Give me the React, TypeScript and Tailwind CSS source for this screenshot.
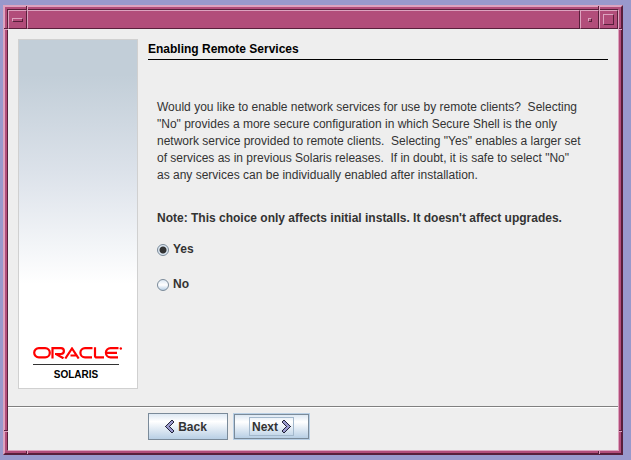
import React, { useState } from 'react';

const CHOICES = [
  { id: 'yes', label: 'Yes' },
  { id: 'no', label: 'No' },
];

const MESSAGE = [
  'Would you like to enable network services for use by remote clients?  Selecting',
  '"No" provides a more secure configuration in which Secure Shell is the only',
  'network service provided to remote clients.  Selecting "Yes" enables a larger set',
  'of services as in previous Solaris releases.  If in doubt, it is safe to select "No"',
  'as any services can be individually enabled after installation.',
].join('\n');

// Raised edge: light on top and left, dark on the right and bottom
const raised = 'border border-[#dca3bf] border-r-[#591f3b] border-b-[#591f3b]';

// Short notches that mark the resize corners on the frame
const FrameNotches: React.FC = () => (
  <div aria-hidden="true">
    <div className="absolute -top-px left-[21px] h-1 w-[2px] border-l border-l-[#591f3b] bg-[#dca3bf]" />
    <div className="absolute -top-px right-[21px] h-1 w-[2px] border-l border-l-[#591f3b] bg-[#dca3bf]" />
    <div className="absolute -bottom-px left-[21px] h-[3px] w-[2px] border-l border-l-[#591f3b] bg-[#dca3bf]" />
    <div className="absolute right-[21px] -bottom-px h-[3px] w-[2px] border-l border-l-[#591f3b] bg-[#dca3bf]" />
    <div className="absolute top-[21px] -left-px h-[2px] w-1 border-t border-t-[#591f3b] bg-[#dca3bf]" />
    <div className="absolute top-[21px] -right-px h-[2px] w-[3px] border-t border-t-[#591f3b] bg-[#dca3bf]" />
    <div className="absolute bottom-[21px] -left-px h-[2px] w-1 border-t border-t-[#591f3b] bg-[#dca3bf]" />
    <div className="absolute -right-px bottom-[21px] h-[2px] w-[3px] border-t border-t-[#591f3b] bg-[#dca3bf]" />
  </div>
);

const TitleBar: React.FC = () => (
  <div className="flex h-[19px] bg-[#b24d7a]">
    <button type="button" aria-label="Window menu" className={`${raised} flex w-[19px] items-center justify-center`}>
      <span className={`${raised} h-1 w-[11px]`} />
    </button>
    <div className={`${raised} flex-1`} />
    <button type="button" aria-label="Minimize" className={`${raised} flex w-[19px] items-center justify-center`}>
      <span className={`${raised} size-1`} />
    </button>
    <button type="button" aria-label="Maximize" className={`${raised} flex w-[19px] items-center justify-center`}>
      <span className={`${raised} size-[11px]`} />
    </button>
  </div>
);

const OracleLogo: React.FC = () => (
  <svg width="90" height="12" viewBox="0 0 90 12" fill="none" stroke="#f00" strokeWidth="2.2" role="img" aria-label="Oracle">
    <path d="M5.800 1.200H12.200a4.600 4.600 0 0 1 0 9.200H5.800a4.600 4.600 0 0 1 0-9.200z" />
    <path d="M19.500 11.500V1.200H28a2.800 2.800 0 0 1 0 5.800H22L23 7L30.500 11.300" />
    <path d="M32.300 11.500L39 1.500L45.700 11.500M37.500 8.500H43" />
    <path d="M59.500 1.200H52a4.600 4.600 0 0 0 0 9.200H59" />
    <path d="M62 0.200V8.700Q62 10.400 63.800 10.400H71" />
    <path d="M85.500 1.200H77.500a4.600 4.600 0 0 0 0 9.200H85M73.500 5.800H84" />
    <circle cx="87.800" cy="1.500" r="1.200" fill="#f00" stroke="none" />
  </svg>
);

const Chevron: React.FC<{ flipped?: boolean }> = ({ flipped }) => (
  <svg width="9" height="13" viewBox="0 0 9 13" className={flipped ? '-scale-x-100' : ''} shapeRendering="crispEdges" aria-hidden="true">
    <path d="M6 0H8V1H9V3H8V4H7V5H6V6H5V7H6V8H7V9H8V10H9V12H8V13H6V12H5V11H4V10H3V9H2V8H1V7H0V6H1V5H2V4H3V3H4V2H5V1H6Z" fill="#222238" />
    <path d="M6 1H8V3H7V4H6V5H5V6H4V7H5V8H6V9H7V10H8V12H6V11H5V10H4V9H3V8H2V7H1V6H2V5H3V4H4V3H5V2H6Z" fill="#9999cc" />
  </svg>
);

export default function App() {
  const [choice, setChoice] = useState('yes');

  return (
    <div className="min-h-screen bg-[#9999cc] pt-[5px] pr-2 pb-[5px] pl-[3px] font-['Liberation_Sans',Arial,sans-serif] text-[12px] text-[#333]">
      <div className="relative flex min-h-[450px] flex-col border-2 border-[#dca3bf] border-r-[#591f3b] border-b-[#591f3b] bg-[#b24d7a] p-[2px]">
        <div className="flex flex-1 flex-col border border-[#591f3b] border-r-[#dca3bf] border-b-[#dca3bf]">
          <TitleBar />
          <main className="flex flex-1 flex-col bg-[#eee]">
            <div className="flex flex-1 px-[10px] pt-[10px] pb-[17px]">
              <aside className="flex w-[120px] shrink-0 flex-col items-center justify-end border border-[#d0d0d0] bg-linear-to-b from-[#c2ced8] from-10% via-[#dce2ea] via-38% to-white to-70% pb-[7px]">
                <div className="w-[90px]">
                  <OracleLogo />
                  <div className="mt-[5px] w-[86px] border-t border-[#333] pt-[3px] text-center text-[10px] leading-[13px] font-bold text-black">
                    SOLARIS
                  </div>
                </div>
              </aside>
              <section className="ml-[10px] flex-1">
                <h1 className="border-b border-black py-[2px] text-[12px] leading-4 font-bold text-black">Enabling Remote Services</h1>
                <div className="px-[9px] pt-[39px]">
                  <p className="leading-[17px] whitespace-pre">{MESSAGE}</p>
                  <p className="mt-[26px] leading-[17px] font-bold">Note: This choice only affects initial installs. It doesn't affect upgrades.</p>
                  <div className="mt-[14px] flex flex-col items-start gap-[18px]">
                    {CHOICES.map((item) => (
                      <label key={item.id} className="flex items-center gap-1 leading-[17px] font-bold">
                        <input
                          type="radio"
                          name="remote-services"
                          value={item.id}
                          checked={choice === item.id}
                          onChange={() => setChoice(item.id)}
                          className="size-3 appearance-none rounded-full border border-[#7a8a99] bg-linear-to-b from-[#dde8f3] via-white to-[#b8cfe5] checked:bg-[radial-gradient(circle,#333_3px,#dde8f3_4px)]"
                        />
                        {item.label}
                      </label>
                    ))}
                  </div>
                </div>
              </section>
            </div>
            <footer className="flex gap-[5px] border-t border-[#808080] pt-[6px] pb-[10px] pl-[140px] shadow-[inset_0_1px_0_#fff]">
              <button type="button" className="flex h-[27px] w-20 items-center justify-center gap-1 border border-[#7a8a99] bg-linear-to-b from-[#dde8f3] via-white via-30% to-[#b8cfe5] pr-1 leading-4 font-bold">
                <Chevron />
                Back
              </button>
              <button type="button" className="flex h-[27px] w-[77px] border border-[#b8cfe5] leading-4 font-bold">
                <span className="flex h-full w-full items-center justify-center border border-[#7a8a99] bg-linear-to-b from-[#dde8f3] via-white via-30% to-[#b8cfe5]">
                  <span className="flex h-[19px] w-[45px] items-center justify-center gap-1 border border-[#a3b8cc]">
                    Next
                    <Chevron flipped />
                  </span>
                </span>
              </button>
            </footer>
          </main>
        </div>
        <FrameNotches />
      </div>
    </div>
  );
}
